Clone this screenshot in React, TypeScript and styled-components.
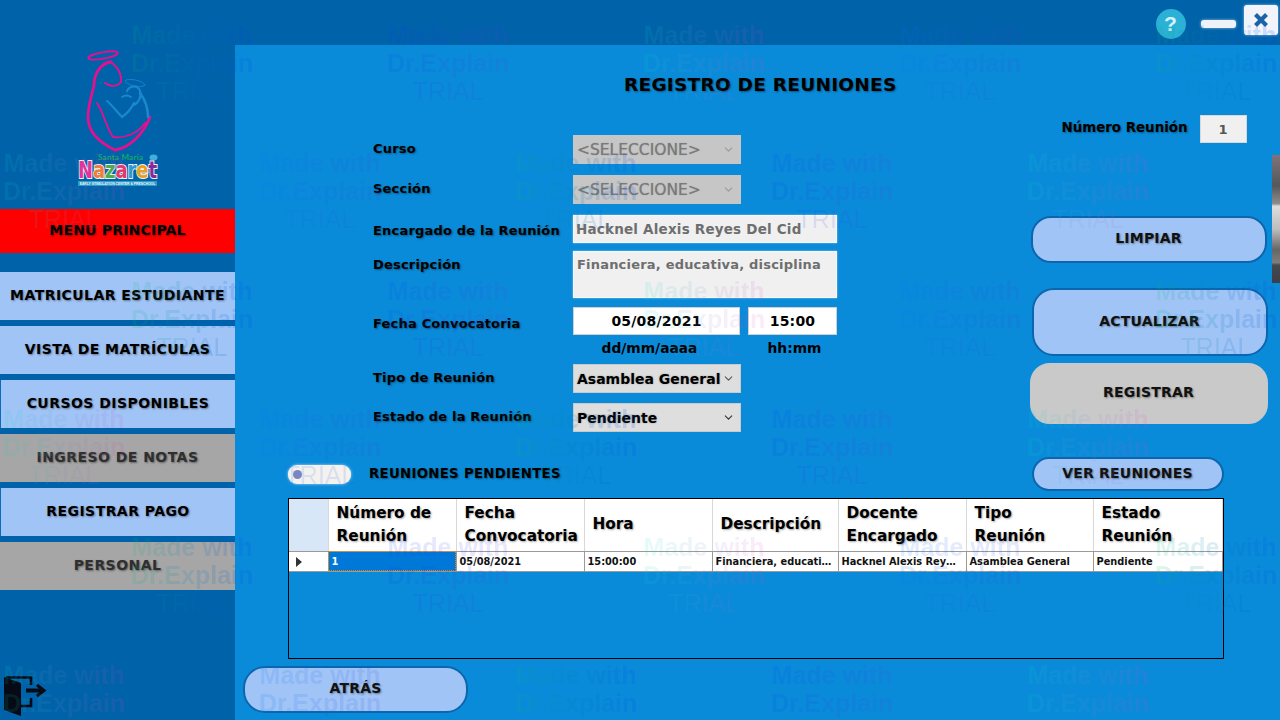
import { FunctionComponent } from "react";
import styled, { createGlobalStyle } from "styled-components";
import { ChevronDown } from "lucide-react";

const Global = createGlobalStyle`
  html, body { margin: 0; padding: 0; }
  body { width: 1280px; height: 720px; overflow: hidden; }
  * { box-sizing: border-box; }
`;

const FONT = `"DejaVu Sans", "Liberation Sans", sans-serif`;
const BLUR = "1px 1px 2px rgba(0, 0, 0, 0.4)";

const Screen = styled.div`
  position: relative;
  display: flex;
  width: 1280px;
  height: 720px;
  overflow: hidden;
  background-color: #0062a9;
  font-family: ${FONT};
  font-weight: 700;
  color: #000;
`;

/* sidebar */
const Sidebar = styled.aside`
  width: 235px;
  flex-shrink: 0;
  display: flex;
  flex-direction: column;
`;
const LogoWrap = styled.div`
  height: 209px;
  padding: 45px 0 0 70px;
`;
const MenuTitle = styled.div`
  height: 44px;
  padding-bottom: 2px;
  background-color: #ff0000;
  display: flex;
  align-items: center;
  justify-content: center;
  font-size: 14px;
  letter-spacing: 0.2px;
  text-shadow: ${BLUR};
`;
const MenuList = styled.nav`
  margin-top: 19px;
  display: flex;
  flex-direction: column;
  gap: 6px;
`;
const MenuItem = styled.div<{ $off?: boolean; $edge?: boolean }>`
  height: 48px;
  padding-bottom: 2px;
  display: flex;
  align-items: center;
  justify-content: center;
  font-size: 14px;
  letter-spacing: 0.45px;
  background-color: ${(p) => (p.$off ? "#a6a6a6" : "#a0c4f6")};
  color: ${(p) => (p.$off ? "#2f2f2f" : "#000")};
  border-left: ${(p) => (p.$edge ? "1px solid #0a6cb4" : "none")};
  text-shadow: ${BLUR};
`;
const ExitWrap = styled.div`
  margin-top: auto;
  height: 50px;
`;

/* right side */
const Right = styled.div`
  flex: 1;
  display: flex;
  flex-direction: column;
`;
const TopBar = styled.header`
  height: 45px;
  display: flex;
  align-items: center;
  justify-content: flex-end;
  padding-right: 3px;
`;
const Help = styled.div`
  width: 30px;
  height: 30px;
  margin: 3px 15px 0 0;
  border-radius: 50%;
  background-color: #2bb0d6;
  color: #d6f3fb;
  display: flex;
  align-items: center;
  justify-content: center;
  font-size: 21px;
  font-family: "Liberation Sans", sans-serif;
`;
const Minimize = styled.div`
  width: 35px;
  height: 8px;
  margin: 3px 8px 0 0;
  border-radius: 3px;
  background-color: #eef3fb;
  box-shadow: 0 0 3px rgba(255, 255, 255, 0.6);
`;
const CloseBtn = styled.div`
  width: 34px;
  height: 30px;
  margin-bottom: 6px;
  border-radius: 3px;
  background-color: #f1f5fb;
  box-shadow: 0 0 3px rgba(255, 255, 255, 0.6);
  display: flex;
  align-items: center;
  justify-content: center;
`;
const Main = styled.main`
  flex: 1;
  background-color: #0a8bd9;
  display: flex;
  flex-direction: column;
`;
const Title = styled.h1`
  margin: 26px 0 0;
  height: 28px;
  line-height: 28px;
  padding-left: 5px;
  text-align: center;
  font-size: 18.5px;
  letter-spacing: 0.25px;
  font-weight: 700;
  text-shadow: ${BLUR};
`;
const Content = styled.section`
  margin-top: 16px;
  height: 317px;
  display: flex;
  justify-content: space-between;
  padding: 0 13px 0 138px;
`;

/* form */
const Form = styled.div`
  padding-top: 20px;
  display: flex;
  flex-direction: column;
`;
const Row = styled.div<{ $mt?: number }>`
  display: flex;
  align-items: flex-start;
  margin-top: ${(p) => p.$mt ?? 0}px;
`;
const Label = styled.label<{ $top: number }>`
  width: 200px;
  padding-top: ${(p) => p.$top}px;
  font-size: 13px;
  letter-spacing: 0.2px;
  line-height: 18px;
  text-shadow: ${BLUR};
`;
const Select = styled.div<{ $muted?: boolean }>`
  width: 168px;
  height: 29px;
  padding: 0 5px 0 3px;
  display: flex;
  align-items: center;
  justify-content: space-between;
  font-size: ${(p) => (p.$muted ? 15.5 : 14)}px;
  font-weight: ${(p) => (p.$muted ? 400 : 700)};
  background-color: ${(p) => (p.$muted ? "#c6c6c6" : "#dedede")};
  color: ${(p) => (p.$muted ? "#7a7a7a" : "#000")};
  border: 1px solid ${(p) => (p.$muted ? "#c6c6c6" : "#c9c9c9")};
  text-shadow: ${(p) => (p.$muted ? "0 0 1px rgba(0,0,0,0.3)" : "0 0 2px rgba(0,0,0,0.3)")};
  white-space: nowrap;
`;
const ReadOnly = styled.div<{ $tall?: boolean }>`
  width: 264px;
  height: ${(p) => (p.$tall ? 47 : 28)}px;
  padding: ${(p) => (p.$tall ? "5px 3px" : "5px 2px")};
  background-color: #f0f0f0;
  border: 1px solid #f8f8f8;
  box-shadow: 0 0 2px rgba(255, 255, 255, 0.5);
  color: #6e6e6e;
  font-size: ${(p) => (p.$tall ? 13 : 13.5)}px;
  letter-spacing: 0.2px;
  white-space: nowrap;
`;
const DateColumn = styled.div`
  display: flex;
  flex-direction: column;
  align-items: center;
`;
const DateGroup = styled.div`
  display: flex;
  gap: 8px;
`;
const DateInput = styled.div<{ $w: number }>`
  width: ${(p) => p.$w}px;
  height: 28px;
  background-color: #fff;
  border: 1px solid #d0d0d0;
  display: flex;
  align-items: center;
  justify-content: center;
  font-size: 14px;
  letter-spacing: 0.2px;
`;
const HintRow = styled.div`
  display: flex;
  gap: 8px;
  margin-top: 5px;
  height: 24px;
`;
const Hint = styled.span<{ $w: number }>`
  width: ${(p) => p.$w}px;
  text-align: center;
  font-size: 13.8px;
  padding: ${(p) => (p.$w > 100 ? "0 14px 0 0" : "0 0 0 4px")};
`;

/* right column */
const Actions = styled.div`
  width: 238px;
  display: flex;
  flex-direction: column;
`;
const NumberRow = styled.div`
  height: 28px;
  display: flex;
  align-items: center;
  justify-content: flex-end;
  gap: 12px;
  padding-right: 21px;
  white-space: nowrap;
`;
const NumberLabel = styled.span`
  margin-bottom: 3px;
  font-size: 13.4px;
  text-shadow: ${BLUR};
`;
const NumberBox = styled.div`
  width: 47px;
  height: 28px;
  background-color: #f0f0f0;
  border: 1px solid #d8d8d8;
  color: #555;
  display: flex;
  align-items: center;
  justify-content: center;
  font-size: 13px;
`;
const PillButton = styled.button<{
  $w: number;
  $h: number;
  $r: number;
  $mt?: number;
  $ml?: number;
  $off?: boolean;
}>`
  width: ${(p) => p.$w}px;
  height: ${(p) => p.$h}px;
  margin-top: ${(p) => p.$mt ?? 0}px;
  margin-left: ${(p) => p.$ml ?? 0}px;
  border-radius: ${(p) => p.$r}px;
  border: 2px solid ${(p) => (p.$off ? "#c9c9c9" : "#0c66ad")};
  background-color: ${(p) => (p.$off ? "#c9c9c9" : "#a0c4f6")};
  font-family: ${FONT};
  font-weight: 700;
  font-size: 14px;
  letter-spacing: 0.2px;
  color: #111;
  padding: 0 0 3px;
  text-shadow: ${BLUR};
  flex-shrink: 0;
`;

/* pending + table */
const PendingRow = styled.div`
  margin-top: 25px;
  height: 34px;
  padding: 0 57px 0 53px;
  display: flex;
  align-items: center;
`;
const Toggle = styled.div`
  width: 63px;
  height: 19px;
  border-radius: 9px;
  background-color: #f4f2ee;
  box-shadow: 0 0 3px rgba(255, 255, 255, 0.7);
  display: flex;
  align-items: center;
  padding-left: 5px;
`;
const ToggleDot = styled.span`
  width: 9px;
  height: 9px;
  border-radius: 50%;
  background-color: #7a86c0;
`;
const PendingLabel = styled.span`
  margin: 0 auto 2px 18px;
  font-size: 13.3px;
  letter-spacing: 0.3px;
  text-shadow: ${BLUR};
`;
const GridWrap = styled.div`
  margin: 7px 57px 0 53px;
  height: 161px;
  border: 1px solid #000;
`;
const Grid = styled.table`
  width: 933px;
  table-layout: fixed;
  border-collapse: collapse;
`;
const HeadCell = styled.th<{ $stub?: boolean }>`
  height: 52px;
  padding: 0 0 0 8px;
  text-align: left;
  font-size: 15.3px;
  line-height: 23px;
  font-weight: 700;
  white-space: pre-line;
  background-color: ${(p) => (p.$stub ? "#d7e7f7" : "#fff")};
  border-right: 1px solid #d8d8d8;
  border-bottom: 1px solid #9a9a9a;
  text-shadow: 1px 1px 2px rgba(0, 0, 0, 0.35);
`;
const Cell = styled.td<{ $active?: boolean }>`
  height: 20px;
  padding: 1px 3px 0;
  font-size: 9.8px;
  background-color: ${(p) => (p.$active ? "#0078d7" : "#fff")};
  color: ${(p) => (p.$active ? "#fff" : "#111")};
  outline: ${(p) => (p.$active ? "1px dotted #f08000" : "none")};
  outline-offset: -1px;
  border-right: 1px solid #9a9a9a;
  border-bottom: 1px solid #9a9a9a;
  overflow: hidden;
  white-space: nowrap;
  text-overflow: ellipsis;
`;
const RowArrow = styled.span`
  display: block;
  margin-left: 4px;
  width: 0;
  height: 0;
  border-left: 6px solid #333;
  border-top: 5px solid transparent;
  border-bottom: 5px solid transparent;
`;

/* things lying over the page */
const PhotoSliver = styled.div`
  position: absolute;
  right: 0;
  top: 155px;
  width: 8px;
  height: 128px;
  background: linear-gradient(180deg, #7f7378 0%, #55585a 24%, #8d8d8d 38%, #dddddd 40%, #bdbdbd 58%, #666666 74%, #7d7d7d 84%, #454a50 86%, #3c4046 100%);
`;
const Watermark = styled.div`
  position: absolute;
  inset: 0;
  pointer-events: none;
  font-family: "Liberation Sans", Arial, sans-serif;
  font-size: 25px;
  line-height: 28px;
`;
const WaterRow = styled.div<{ $left: number; $top: number }>`
  position: absolute;
  left: ${(p) => p.$left}px;
  top: ${(p) => p.$top}px;
  display: flex;
`;
const WaterTile = styled.div<{ $tone: string }>`
  width: 256px;
  padding-right: 134px;
  text-align: center;
  white-space: nowrap;
  font-weight: 700;
  color: transparent;
  background: ${(p) => p.$tone};
  background-clip: text;
  -webkit-background-clip: text;
`;
const TrialLine = styled.div`
  font-weight: 400;
`;

const tones = [
  "linear-gradient(90deg, rgba(0,190,120,.13) 0, rgba(0,70,240,.16) 120px)",
  "linear-gradient(90deg, rgba(0,60,255,.12) 0, rgba(90,60,230,.12) 120px)",
  "linear-gradient(90deg, rgba(0,230,200,.11) 0, rgba(230,60,200,.11) 120px)",
  "linear-gradient(90deg, rgba(0,120,255,.13) 0, rgba(60,60,220,.12) 120px)",
];

const watermarkRows = [
  { left: 131, top: 21 },
  { left: 3, top: 149 },
  { left: 131, top: 277 },
  { left: 3, top: 405 },
  { left: 131, top: 533 },
  { left: 3, top: 661 },
];

const menu = [
  { text: "MATRICULAR ESTUDIANTE" },
  { text: "VISTA DE MATRÍCULAS" },
  { text: "CURSOS DISPONIBLES", edge: true },
  { text: "INGRESO DE NOTAS", off: true },
  { text: "REGISTRAR PAGO", edge: true },
  { text: "PERSONAL", off: true },
];

const columns = [
  { title: "Número de\nReunión", width: 128 },
  { title: "Fecha\nConvocatoria", width: 128 },
  { title: "Hora", width: 128 },
  { title: "Descripción", width: 126 },
  { title: "Docente\nEncargado", width: 128 },
  { title: "Tipo\nReunión", width: 127 },
  { title: "Estado\nReunión", width: 129 },
];

const rowValues = [
  "1",
  "05/08/2021",
  "15:00:00",
  "Financiera, educativa, disciplina",
  "Hacknel Alexis Reyes Del Cid",
  "Asamblea General",
  "Pendiente",
];

const Logo = () => (
  <svg width="100" height="145" viewBox="0 0 100 145" fill="none">
    <g stroke="#e4108f" strokeLinecap="round">
      <ellipse cx="33" cy="10.5" rx="15" ry="3.2" transform="rotate(-10 33 10.5)" strokeWidth="1.8" />
      <path d="M41 17 C30 18 24 30 24 40 C22 50 18 60 18 72 C18 85 26 96 45 105 C60 103 74 88 80 72" strokeWidth="2.8" />
      <path d="M41 17 C50 24 52 32 51 37 C47 42 40 42 35 38" strokeWidth="2" />
      <path d="M27 58 C33 66 36 82 43 92 C55 94 68 88 75 78" strokeWidth="1.8" />
    </g>
    <g stroke="#1a88cc" strokeLinecap="round">
      <ellipse cx="65" cy="38" rx="10" ry="3" transform="rotate(12 65 38)" strokeWidth="0.8" />
      <path d="M57 46 C60 40 68 40 70 46 C72 52 68 58 64 60" strokeWidth="2.2" />
      <path d="M52 52 C55 50 58 50 61 52" strokeWidth="1.8" />
      <path d="M37 56 C42 60 48 68 52 72 C58 68 62 62 64 58" strokeWidth="2.2" />
      <path d="M70 48 C76 56 78 66 78 72" strokeWidth="2.6" />
    </g>
    <text x="28" y="115" fontFamily="Lato, sans-serif" fontSize="8" fontWeight="700" fill="#16a86a" textLength="45">
      Santa María
    </text>
    <ellipse cx="83.5" cy="112.5" rx="4" ry="3" fill="#3fb0dc" />
    <text
      x="8"
      y="133"
      fontFamily="'DejaVu Sans', sans-serif"
      fontSize="23"
      fontWeight="700"
      stroke="#f4f0f4"
      strokeWidth="2"
      paintOrder="stroke"
      textLength="79"
      lengthAdjust="spacingAndGlyphs"
    >
      <tspan fill="#e6309a">N</tspan>
      <tspan fill="#f08030">a</tspan>
      <tspan fill="#46b04a">z</tspan>
      <tspan fill="#e23a6a">a</tspan>
      <tspan fill="#2a9ad0">r</tspan>
      <tspan fill="#e8a020">e</tspan>
      <tspan fill="#8a2a9a">t</tspan>
    </text>
    <rect x="8" y="136" width="79" height="5" fill="#2d9cc6" />
    <text x="47.5" y="140" textAnchor="middle" fontFamily="'Liberation Sans', sans-serif" fontSize="3.4" fill="#e8f6fb">
      EARLY STIMULATION CENTER &amp; PRESCHOOL
    </text>
  </svg>
);

const ExitIcon = () => (
  <svg width="60" height="50" viewBox="0 0 60 50" fill="none">
    <path d="M4 7 L21 13 V46 L4 40 Z" fill="#050a14" />
    <path d="M6 7.5 H31 V15 M31 28 V36 H21" stroke="#050a14" strokeWidth="2.6" />
    <path d="M26 20.5 H41" stroke="#050a14" strokeWidth="4" />
    <path d="M37 15 L44 20.5 L37 26" stroke="#050a14" strokeWidth="3" />
  </svg>
);

const App: FunctionComponent = () => {
  return (
    <Screen>
      <Global />
      <Sidebar>
        <LogoWrap>
          <Logo />
        </LogoWrap>
        <MenuTitle>MENU PRINCIPAL</MenuTitle>
        <MenuList>
          {menu.map((item) => (
            <MenuItem key={item.text} $off={item.off} $edge={item.edge}>
              {item.text}
            </MenuItem>
          ))}
        </MenuList>
        <ExitWrap>
          <ExitIcon />
        </ExitWrap>
      </Sidebar>

      <Right>
        <TopBar>
          <Help>?</Help>
          <Minimize />
          <CloseBtn>
            <svg width="16" height="16" viewBox="0 0 16 16">
              <path d="M2.5 2.5 L13.5 13.5 M13.5 2.5 L2.5 13.5" stroke="#1a63a6" strokeWidth="4.2" />
            </svg>
          </CloseBtn>
        </TopBar>
        <Main>
          <Title>REGISTRO DE REUNIONES</Title>
          <Content>
            <Form>
              <Row>
                <Label $top={5}>Curso</Label>
                <Select $muted>
                  &lt;SELECCIONE&gt;
                  <ChevronDown size={13} color="#9a9a9a" />
                </Select>
              </Row>
              <Row $mt={11}>
                <Label $top={5}>Sección</Label>
                <Select $muted>
                  &lt;SELECCIONE&gt;
                  <ChevronDown size={13} color="#9a9a9a" />
                </Select>
              </Row>
              <Row $mt={11}>
                <Label $top={7}>Encargado de la Reunión</Label>
                <ReadOnly>Hacknel Alexis Reyes Del Cid</ReadOnly>
              </Row>
              <Row $mt={8}>
                <Label $top={5}>Descripción</Label>
                <ReadOnly $tall>Financiera, educativa, disciplina</ReadOnly>
              </Row>
              <Row $mt={9}>
                <Label $top={8}>Fecha Convocatoria</Label>
                <DateColumn>
                  <DateGroup>
                    <DateInput $w={167}>05/08/2021</DateInput>
                    <DateInput $w={89}>15:00</DateInput>
                  </DateGroup>
                  <HintRow>
                    <Hint $w={167}>dd/mm/aaaa</Hint>
                    <Hint $w={89}>hh:mm</Hint>
                  </HintRow>
                </DateColumn>
              </Row>
              <Row>
                <Label $top={5}>Tipo de Reunión</Label>
                <Select>
                  Asamblea General
                  <ChevronDown size={13} color="#555" />
                </Select>
              </Row>
              <Row $mt={10}>
                <Label $top={5}>Estado de la Reunión</Label>
                <Select>
                  Pendiente
                  <ChevronDown size={13} color="#333" />
                </Select>
              </Row>
            </Form>

            <Actions>
              <NumberRow>
                <NumberLabel>Número Reunión</NumberLabel>
                <NumberBox>1</NumberBox>
              </NumberRow>
              <PillButton $w={236} $h={47} $r={20} $mt={73} $ml={1}>
                LIMPIAR
              </PillButton>
              <PillButton $w={236} $h={68} $r={22} $mt={25} $ml={2}>
                ACTUALIZAR
              </PillButton>
              <PillButton $w={238} $h={61} $r={20} $mt={7} $off>
                REGISTRAR
              </PillButton>
            </Actions>
          </Content>

          <PendingRow>
            <Toggle>
              <ToggleDot />
            </Toggle>
            <PendingLabel>REUNIONES PENDIENTES</PendingLabel>
            <PillButton $w={192} $h={34} $r={17}>
              VER REUNIONES
            </PillButton>
          </PendingRow>

          <GridWrap>
            <Grid>
              <colgroup>
                <col style={{ width: 39 }} />
                {columns.map((c) => (
                  <col key={c.title} style={{ width: c.width }} />
                ))}
              </colgroup>
              <thead>
                <tr>
                  <HeadCell $stub />
                  {columns.map((c) => (
                    <HeadCell key={c.title}>{c.title}</HeadCell>
                  ))}
                </tr>
              </thead>
              <tbody>
                <tr>
                  <Cell>
                    <RowArrow />
                  </Cell>
                  {rowValues.map((v, i) => (
                    <Cell key={v} $active={i === 0}>
                      {v}
                    </Cell>
                  ))}
                </tr>
              </tbody>
            </Grid>
          </GridWrap>

          <PillButton $w={225} $h={47} $r={22} $mt={7} $ml={8}>
            ATRÁS
          </PillButton>
        </Main>
      </Right>

      <PhotoSliver />

      <Watermark>
        {watermarkRows.map((row, r) => (
          <WaterRow key={row.top} $left={row.left} $top={row.top}>
            {[0, 1, 2, 3, 4].map((c) => (
              <WaterTile key={c} $tone={tones[(r * 2 + c) % tones.length]}>
                Made with
                <br />
                Dr.Explain
                <TrialLine>TRIAL</TrialLine>
              </WaterTile>
            ))}
          </WaterRow>
        ))}
      </Watermark>
    </Screen>
  );
};

export default App;
